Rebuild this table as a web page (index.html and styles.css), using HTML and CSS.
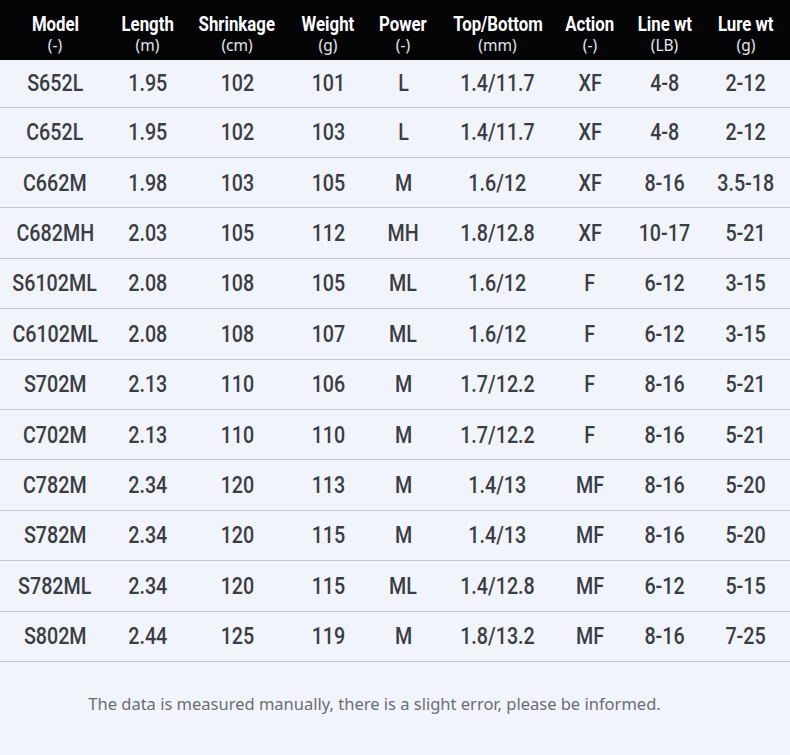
FILE: index.html
```html
<!DOCTYPE html>
<html>
<head>
<meta charset="utf-8">
<link rel="stylesheet" href="styles.css">
</head>
<body>
<div class="sheet">
  <div class="row head">
    <div class="cell"><span class="t">Model</span><span class="u">(-)</span></div>
    <div class="cell"><span class="t">Length</span><span class="u">(m)</span></div>
    <div class="cell"><span class="t">Shrinkage</span><span class="u">(cm)</span></div>
    <div class="cell"><span class="t">Weight</span><span class="u">(g)</span></div>
    <div class="cell"><span class="t">Power</span><span class="u">(-)</span></div>
    <div class="cell"><span class="t">Top/Bottom</span><span class="u">(mm)</span></div>
    <div class="cell"><span class="t">Action</span><span class="u">(-)</span></div>
    <div class="cell"><span class="t">Line wt</span><span class="u">(LB)</span></div>
    <div class="cell"><span class="t">Lure wt</span><span class="u">(g)</span></div>
  </div>
  <div class="row data first"><div class="cell"><span>S652L</span></div><div class="cell"><span>1.95</span></div><div class="cell"><span>102</span></div><div class="cell"><span>101</span></div><div class="cell"><span>L</span></div><div class="cell"><span>1.4/11.7</span></div><div class="cell"><span>XF</span></div><div class="cell"><span>4-8</span></div><div class="cell"><span>2-12</span></div></div>
  <div class="row data"><div class="cell"><span>C652L</span></div><div class="cell"><span>1.95</span></div><div class="cell"><span>102</span></div><div class="cell"><span>103</span></div><div class="cell"><span>L</span></div><div class="cell"><span>1.4/11.7</span></div><div class="cell"><span>XF</span></div><div class="cell"><span>4-8</span></div><div class="cell"><span>2-12</span></div></div>
  <div class="row data"><div class="cell"><span>C662M</span></div><div class="cell"><span>1.98</span></div><div class="cell"><span>103</span></div><div class="cell"><span>105</span></div><div class="cell"><span>M</span></div><div class="cell"><span>1.6/12</span></div><div class="cell"><span>XF</span></div><div class="cell"><span>8-16</span></div><div class="cell"><span>3.5-18</span></div></div>
  <div class="row data"><div class="cell"><span>C682MH</span></div><div class="cell"><span>2.03</span></div><div class="cell"><span>105</span></div><div class="cell"><span>112</span></div><div class="cell"><span>MH</span></div><div class="cell"><span>1.8/12.8</span></div><div class="cell"><span>XF</span></div><div class="cell"><span>10-17</span></div><div class="cell"><span>5-21</span></div></div>
  <div class="row data"><div class="cell"><span>S6102ML</span></div><div class="cell"><span>2.08</span></div><div class="cell"><span>108</span></div><div class="cell"><span>105</span></div><div class="cell"><span>ML</span></div><div class="cell"><span>1.6/12</span></div><div class="cell"><span>F</span></div><div class="cell"><span>6-12</span></div><div class="cell"><span>3-15</span></div></div>
  <div class="row data"><div class="cell"><span>C6102ML</span></div><div class="cell"><span>2.08</span></div><div class="cell"><span>108</span></div><div class="cell"><span>107</span></div><div class="cell"><span>ML</span></div><div class="cell"><span>1.6/12</span></div><div class="cell"><span>F</span></div><div class="cell"><span>6-12</span></div><div class="cell"><span>3-15</span></div></div>
  <div class="row data"><div class="cell"><span>S702M</span></div><div class="cell"><span>2.13</span></div><div class="cell"><span>110</span></div><div class="cell"><span>106</span></div><div class="cell"><span>M</span></div><div class="cell"><span>1.7/12.2</span></div><div class="cell"><span>F</span></div><div class="cell"><span>8-16</span></div><div class="cell"><span>5-21</span></div></div>
  <div class="row data"><div class="cell"><span>C702M</span></div><div class="cell"><span>2.13</span></div><div class="cell"><span>110</span></div><div class="cell"><span>110</span></div><div class="cell"><span>M</span></div><div class="cell"><span>1.7/12.2</span></div><div class="cell"><span>F</span></div><div class="cell"><span>8-16</span></div><div class="cell"><span>5-21</span></div></div>
  <div class="row data"><div class="cell"><span>C782M</span></div><div class="cell"><span>2.34</span></div><div class="cell"><span>120</span></div><div class="cell"><span>113</span></div><div class="cell"><span>M</span></div><div class="cell"><span>1.4/13</span></div><div class="cell"><span>MF</span></div><div class="cell"><span>8-16</span></div><div class="cell"><span>5-20</span></div></div>
  <div class="row data"><div class="cell"><span>S782M</span></div><div class="cell"><span>2.34</span></div><div class="cell"><span>120</span></div><div class="cell"><span>115</span></div><div class="cell"><span>M</span></div><div class="cell"><span>1.4/13</span></div><div class="cell"><span>MF</span></div><div class="cell"><span>8-16</span></div><div class="cell"><span>5-20</span></div></div>
  <div class="row data"><div class="cell"><span>S782ML</span></div><div class="cell"><span>2.34</span></div><div class="cell"><span>120</span></div><div class="cell"><span>115</span></div><div class="cell"><span>ML</span></div><div class="cell"><span>1.4/12.8</span></div><div class="cell"><span>MF</span></div><div class="cell"><span>6-12</span></div><div class="cell"><span>5-15</span></div></div>
  <div class="row data"><div class="cell"><span>S802M</span></div><div class="cell"><span>2.44</span></div><div class="cell"><span>125</span></div><div class="cell"><span>119</span></div><div class="cell"><span>M</span></div><div class="cell"><span>1.8/13.2</span></div><div class="cell"><span>MF</span></div><div class="cell"><span>8-16</span></div><div class="cell"><span>7-25</span></div></div>
  <p class="note">The data is measured manually, there is a slight error, please be informed.</p>
</div>
</body>
</html>
```

FILE: styles.css
```css
html, body {
  margin: 0;
  padding: 0;
  background: #f2f4fb;
}
.sheet {
  width: 790px;
  height: 755px;
  background: #f2f4fb;
  display: flex;
  flex-direction: column;
}
.row {
  display: grid;
  grid-template-columns: 110px 75px 104px 78px 72px 117px 68px 81px 82px 3px;
}
.head {
  height: 60px;
  box-sizing: border-box;
  background: #050508;
  color: #ffffff;
  overflow: hidden;
}
.head .cell {
  display: flex;
  flex-direction: column;
  align-items: center;
  justify-content: flex-start;
  padding-top: 12px;
}
.head .t {
  display: inline-block;
  font-family: Roboto, "Liberation Sans", sans-serif;
  font-weight: 700;
  font-size: 21px;
  line-height: 25px;
  white-space: nowrap;
  transform: scaleX(0.8);
}
.head .u {
  font-family: "Noto Sans", "Open Sans", sans-serif;
  font-size: 15.5px;
  line-height: 17px;
  color: #e6e6ec;
}
.data {
  height: 50.4px;
  box-sizing: border-box;
  border-bottom: 1px solid #c6c7cf;
  color: #3a3d44;
}
.data.first {
  height: 47.6px;
}
.data .cell {
  display: flex;
  align-items: center;
  justify-content: center;
}
.data .cell span {
  display: inline-block;
  font-family: Roboto, "Liberation Sans", sans-serif;
  font-size: 24px;
  font-weight: 500;
  white-space: nowrap;
  transform: scaleX(0.82);
}
.note {
  margin: 30px 0 0;
  padding-right: 41px;
  text-align: center;
  font-family: "Noto Sans", "Open Sans", sans-serif;
  font-size: 16.5px;
  color: #6b6d74;
}
```
